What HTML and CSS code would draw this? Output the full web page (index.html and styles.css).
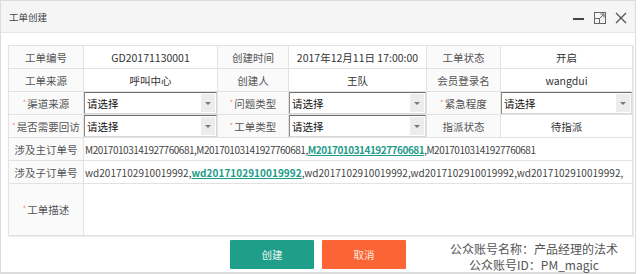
FILE: index.html
```html
<!DOCTYPE html>
<html lang="zh-CN">

<head>
  <meta charset="UTF-8">
  <title>工单创建</title>
  <link rel="stylesheet" href="styles.css">
</head>

<body>
  <div class="dialog">
    <div class="titlebar">
      <span class="title">工单创建</span>
      <div class="tools">
        <svg class="tool" width="12" height="12" viewBox="0 0 12 12">
          <rect x="0" y="6" width="11" height="2" fill="#444" />
        </svg>
        <svg class="tool" width="12" height="12" viewBox="0 0 12 12">
          <rect x="0.5" y="0.5" width="11" height="11" fill="none" stroke="#666" />
          <rect x="0.5" y="6.5" width="5" height="5" fill="none" stroke="#666" />
          <path d="M5 7 L10 2 M6.5 2 H10 V5.5" fill="none" stroke="#666" />
        </svg>
        <svg class="tool" width="12" height="12" viewBox="0 0 12 12">
          <path d="M1 1 L11 11 M11 1 L1 11" stroke="#555" stroke-width="1.3" />
        </svg>
      </div>
    </div>

    <div class="content">
      <table class="form">
        <colgroup>
          <col style="width:75px">
          <col style="width:134px">
          <col style="width:71px">
          <col style="width:138px">
          <col style="width:74px">
          <col style="width:132px">
        </colgroup>
        <tr>
          <th>工单编号</th>
          <td class="center">GD20171130001</td>
          <th>创建时间</th>
          <td class="center">2017年12月11日 17:00:00</td>
          <th>工单状态</th>
          <td class="center">开启</td>
        </tr>
        <tr>
          <th>工单来源</th>
          <td class="center">呼叫中心</td>
          <th>创建人</th>
          <td class="center">王队</td>
          <th>会员登录名</th>
          <td class="center">wangdui</td>
        </tr>
        <tr>
          <th><span class="req">*</span>渠道来源</th>
          <td class="pick"><div class="select"><span>请选择</span><i class="arrow"></i></div></td>
          <th><span class="req">*</span>问题类型</th>
          <td class="pick"><div class="select"><span>请选择</span><i class="arrow"></i></div></td>
          <th><span class="req">*</span>紧急程度</th>
          <td class="pick"><div class="select"><span>请选择</span><i class="arrow"></i></div></td>
        </tr>
        <tr>
          <th><span class="req">*</span>是否需要回访</th>
          <td class="pick"><div class="select"><span>请选择</span><i class="arrow"></i></div></td>
          <th><span class="req">*</span>工单类型</th>
          <td class="pick"><div class="select"><span>请选择</span><i class="arrow"></i></div></td>
          <th>指派状态</th>
          <td class="center">待指派</td>
        </tr>
        <tr>
          <th>涉及主订单号</th>
          <td colspan="5" class="ids ids-main">M20170103141927760681,M20170103141927760681,<a class="link">M20170103141927760681</a>,M20170103141927760681</td>
        </tr>
        <tr>
          <th>涉及子订单号</th>
          <td colspan="5" class="ids ids-sub">wd2017102910019992,<a class="link">wd2017102910019992</a>,wd2017102910019992,wd2017102910019992,wd2017102910019992,</td>
        </tr>
        <tr class="desc">
          <th><span class="req">*</span>工单描述</th>
          <td colspan="5"></td>
        </tr>
      </table>

      <div class="actions">
        <button class="btn btn-ok">创建</button>
        <button class="btn btn-cancel">取消</button>
      </div>
    </div>

    <div class="watermark">
      <div>公众账号名称：产品经理的法术</div>
      <div>公众账号ID：PM_magic</div>
    </div>
  </div>
</body>

</html>
```

FILE: styles.css
```css
body {
  margin: 0;
  font-family: "Noto Sans CJK SC", "Noto Sans", sans-serif;
  background: #fff;
}

.dialog {
  position: relative;
  width: 636px;
  height: 274px;
  box-sizing: border-box;
  border: 1px solid #dcdcdc;
  border-bottom-width: 2px;
  background: #fff;
}

.titlebar {
  height: 31px;
  display: flex;
  align-items: center;
  justify-content: space-between;
  padding: 0 8px 0 8px;
  background: #f5f5f5;
  border-bottom: 1px solid #e6e6e6;
}

.title {
  font-size: 9.5px;
  color: #444;
}

.tools {
  display: flex;
  gap: 9px;
  align-items: center;
  margin-top: 2px;
}

.tool {
  display: block;
}

.content {
  padding: 12px 0 0 7px;
}

.form {
  border-collapse: collapse;
  table-layout: fixed;
  width: 624px;
  font-size: 10.5px;
  color: #333;
  box-shadow: 1px 1px 0 #ececec;
}

.form th,
.form td {
  border: 1px solid #e2e2e2;
  height: 22px;
  padding: 0;
  white-space: nowrap;
  overflow: hidden;
}

.form th {
  background: #fafafa;
  font-weight: normal;
  color: #555;
}

.form td {
  background: #fff;
}

.center {
  text-align: center;
}

.form .ids {
  padding-left: 1px;
  font-size: 10px;
  color: #444;
}

.form .ids-main {
  letter-spacing: -0.48px;
}

.form .ids-sub {
  letter-spacing: 0.04px;
}

.link {
  color: #1e9c89;
  font-weight: bold;
  text-decoration: underline;
}

.req {
  color: #f08060;
  font-size: 7px;
  vertical-align: 3px;
  margin-right: 1px;
}

.pick {
  vertical-align: top;
}

.select {
  display: flex;
  align-items: center;
  justify-content: space-between;
  height: 20px;
  border-top: 1px solid #6f6f6f;
  border-left: 1px solid #8a8a8a;
  border-right: 1px solid #d8d8d8;
  border-bottom: 1px solid #d8d8d8;
  color: #111;
  background: #fff;
}

.select span {
  padding-left: 2px;
}

.arrow {
  width: 14px;
  height: 18px;
  margin: 1px;
  background: #ececec;
  position: relative;
}

.arrow::after {
  content: '';
  position: absolute;
  left: 4px;
  top: 8px;
  border-left: 3px solid transparent;
  border-right: 3px solid transparent;
  border-top: 3px solid #777;
}

.desc th,
.desc td {
  height: 51px;
}

.actions {
  display: flex;
  justify-content: center;
  gap: 8px;
  margin-top: 4px;
  padding-right: 7px;
}

.btn {
  width: 84px;
  height: 29px;
  border: none;
  border-radius: 1px;
  font-family: inherit;
  font-size: 10.5px;
  color: #e9f7f4;
}

.btn-ok {
  background: #1f9e8a;
}

.btn-cancel {
  background: #fb6535;
  color: #ffe8dc;
}

.watermark {
  position: absolute;
  left: 446px;
  top: 240px;
  width: 174px;
  text-align: center;
  font-size: 12px;
  line-height: 16px;
  color: #555;
}
```
